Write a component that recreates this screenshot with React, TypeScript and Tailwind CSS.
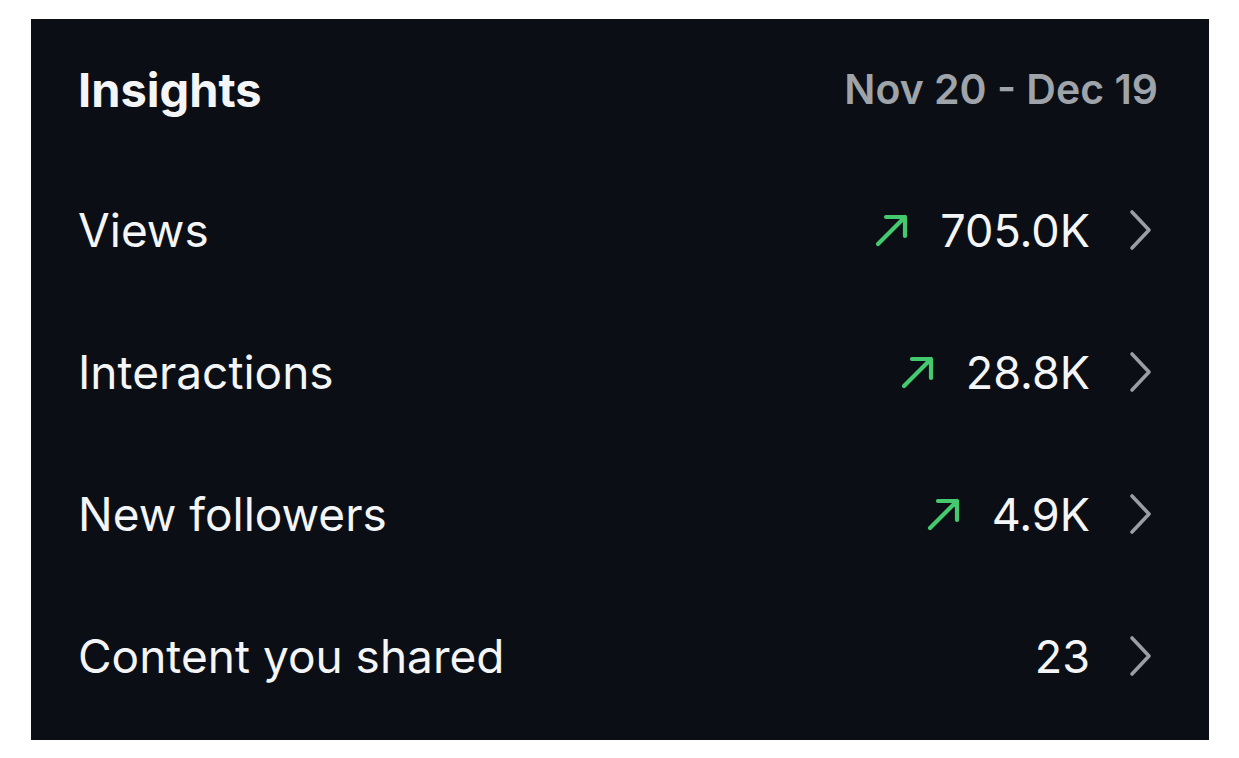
import React from "react";

interface Stat {
  label: string;
  value: string;
  up?: boolean;
}

const stats: Stat[] = [
  { label: "Views", value: "705.0K", up: true },
  { label: "Interactions", value: "28.8K", up: true },
  { label: "New followers", value: "4.9K", up: true },
  { label: "Content you shared", value: "23" },
];

function UpArrow() {
  return (
    <svg width="34" height="34" viewBox="0 0 34 34" fill="none">
      <path
        d="M3 31 L30 4 M11 4 H30 V23"
        stroke="#45c96f"
        strokeWidth="4.2"
        strokeLinecap="round"
        strokeLinejoin="round"
      />
    </svg>
  );
}

function Chevron() {
  return (
    <svg width="24" height="42" viewBox="0 0 24 42" fill="none">
      <path
        d="M4 3 L21 21 L4 39"
        stroke="#9c9da2"
        strokeWidth="3.6"
        strokeLinecap="round"
        strokeLinejoin="round"
      />
    </svg>
  );
}

export default function App() {
  return (
    <div className="min-h-[758px] w-full bg-white pt-[19px] pl-[31px] font-['Inter',sans-serif]">
      <div className="flex h-[721px] w-[1178px] flex-col bg-[#0b0f15] pl-[47px] pr-[51px] pb-[13px]">
        <div className="flex h-[140px] items-center justify-between">
          <h1 className="text-[47px] font-bold leading-none text-[#f4f5f7]">Insights</h1>
          <span className="text-[41px] font-semibold leading-none text-[#9fa3aa]">
            Nov 20 - Dec 19
          </span>
        </div>

        {stats.map((s, i) => (
          <div key={i} className="flex h-[142px] items-center justify-between">
            <span className="text-[46px] leading-none text-[#f4f5f7]">{s.label}</span>
            <div className="flex items-center">
              {s.up && (
                <span className="mr-[31px] flex">
                  <UpArrow />
                </span>
              )}
              <span className="text-[45px] leading-none text-[#f4f5f7]">{s.value}</span>
              <span className="ml-[38px] mr-[6px] flex">
                <Chevron />
              </span>
            </div>
          </div>
        ))}
      </div>
    </div>
  );
}
